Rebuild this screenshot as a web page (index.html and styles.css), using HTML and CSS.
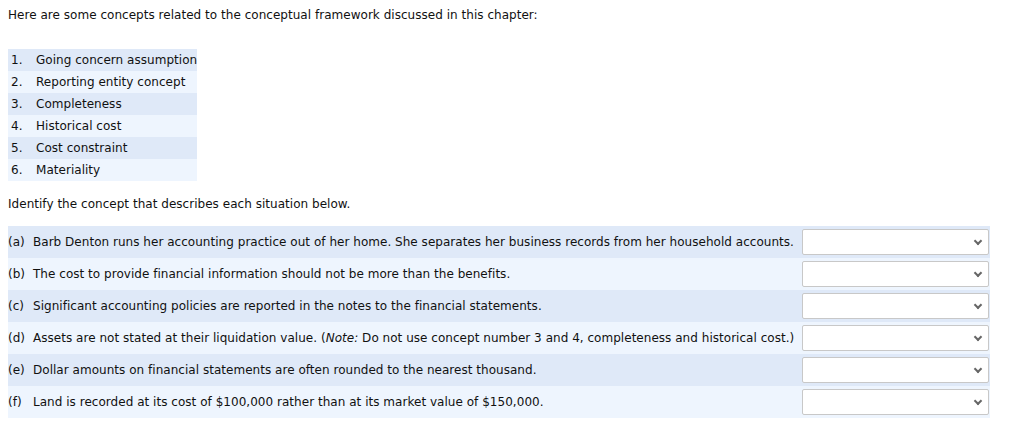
FILE: index.html
```html
<!DOCTYPE html>
<html>
<head>
<meta charset="utf-8">
<link rel="stylesheet" href="styles.css">
</head>
<body>
<p class="intro">Here are some concepts related to the conceptual framework discussed in this chapter:</p>
<ol class="concepts">
  <li><span class="num">1.</span><span>Going concern assumption</span></li>
  <li><span class="num">2.</span><span>Reporting entity concept</span></li>
  <li><span class="num">3.</span><span>Completeness</span></li>
  <li><span class="num">4.</span><span>Historical cost</span></li>
  <li><span class="num">5.</span><span>Cost constraint</span></li>
  <li><span class="num">6.</span><span>Materiality</span></li>
</ol>
<p class="prompt">Identify the concept that describes each situation below.</p>
<div class="questions">
  <div class="q"><span class="lbl">(a)</span><span class="txt">Barb Denton runs her accounting practice out of her home. She separates her business records from her household accounts.</span><span class="sel"><span class="chev"></span></span></div>
  <div class="q"><span class="lbl">(b)</span><span class="txt">The cost to provide financial information should not be more than the benefits.</span><span class="sel"><span class="chev"></span></span></div>
  <div class="q"><span class="lbl">(c)</span><span class="txt">Significant accounting policies are reported in the notes to the financial statements.</span><span class="sel"><span class="chev"></span></span></div>
  <div class="q"><span class="lbl">(d)</span><span class="txt">Assets are not stated at their liquidation value. (<i>Note:</i> Do not use concept number 3 and 4, completeness and historical cost.)</span><span class="sel"><span class="chev"></span></span></div>
  <div class="q"><span class="lbl">(e)</span><span class="txt">Dollar amounts on financial statements are often rounded to the nearest thousand.</span><span class="sel"><span class="chev"></span></span></div>
  <div class="q"><span class="lbl">(f)</span><span class="txt">Land is recorded at its cost of $100,000 rather than at its market value of $150,000.</span><span class="sel"><span class="chev"></span></span></div>
</div>
</body>
</html>
```
FILE: styles.css
```css
body {
  margin: 8px;
  font-family: Verdana, "DejaVu Sans", sans-serif;
  font-size: 12px;
  letter-spacing: 0.03px;
  color: #111;
  background: #fff;
}
.intro {
  margin: 0;
  line-height: 15px;
}
.concepts {
  list-style: none;
  margin: 26px 0 0;
  padding: 0;
  width: 189px;
  white-space: nowrap;
}
.concepts li {
  display: flex;
  height: 22px;
  align-items: center;
  padding-left: 3px;
  background: #dfe9f8;
}
.concepts li:nth-child(even) {
  background: #eef5fe;
}
.concepts .num {
  width: 25px;
  flex: none;
}
.prompt {
  margin: 16px 0 0;
  line-height: 15px;
}
.questions {
  margin-top: 14px;
  width: 982px;
}
.q {
  display: flex;
  align-items: center;
  height: 32px;
  background: #dfe9f8;
}
.q:nth-child(even) {
  background: #eef5fe;
}
.lbl {
  width: 25px;
  flex: none;
}
.txt {
  flex: 1;
  white-space: nowrap;
}
.sel {
  flex: none;
  position: relative;
  width: 185px;
  height: 24px;
  margin-right: 1px;
  background: #fff;
  border: 1px solid #c8c8c8;
  border-radius: 2px;
}
.chev {
  position: absolute;
  right: 7px;
  top: 8px;
  width: 4px;
  height: 4px;
  border-right: 2px solid #666;
  border-bottom: 2px solid #666;
  transform: rotate(45deg);
}
```
